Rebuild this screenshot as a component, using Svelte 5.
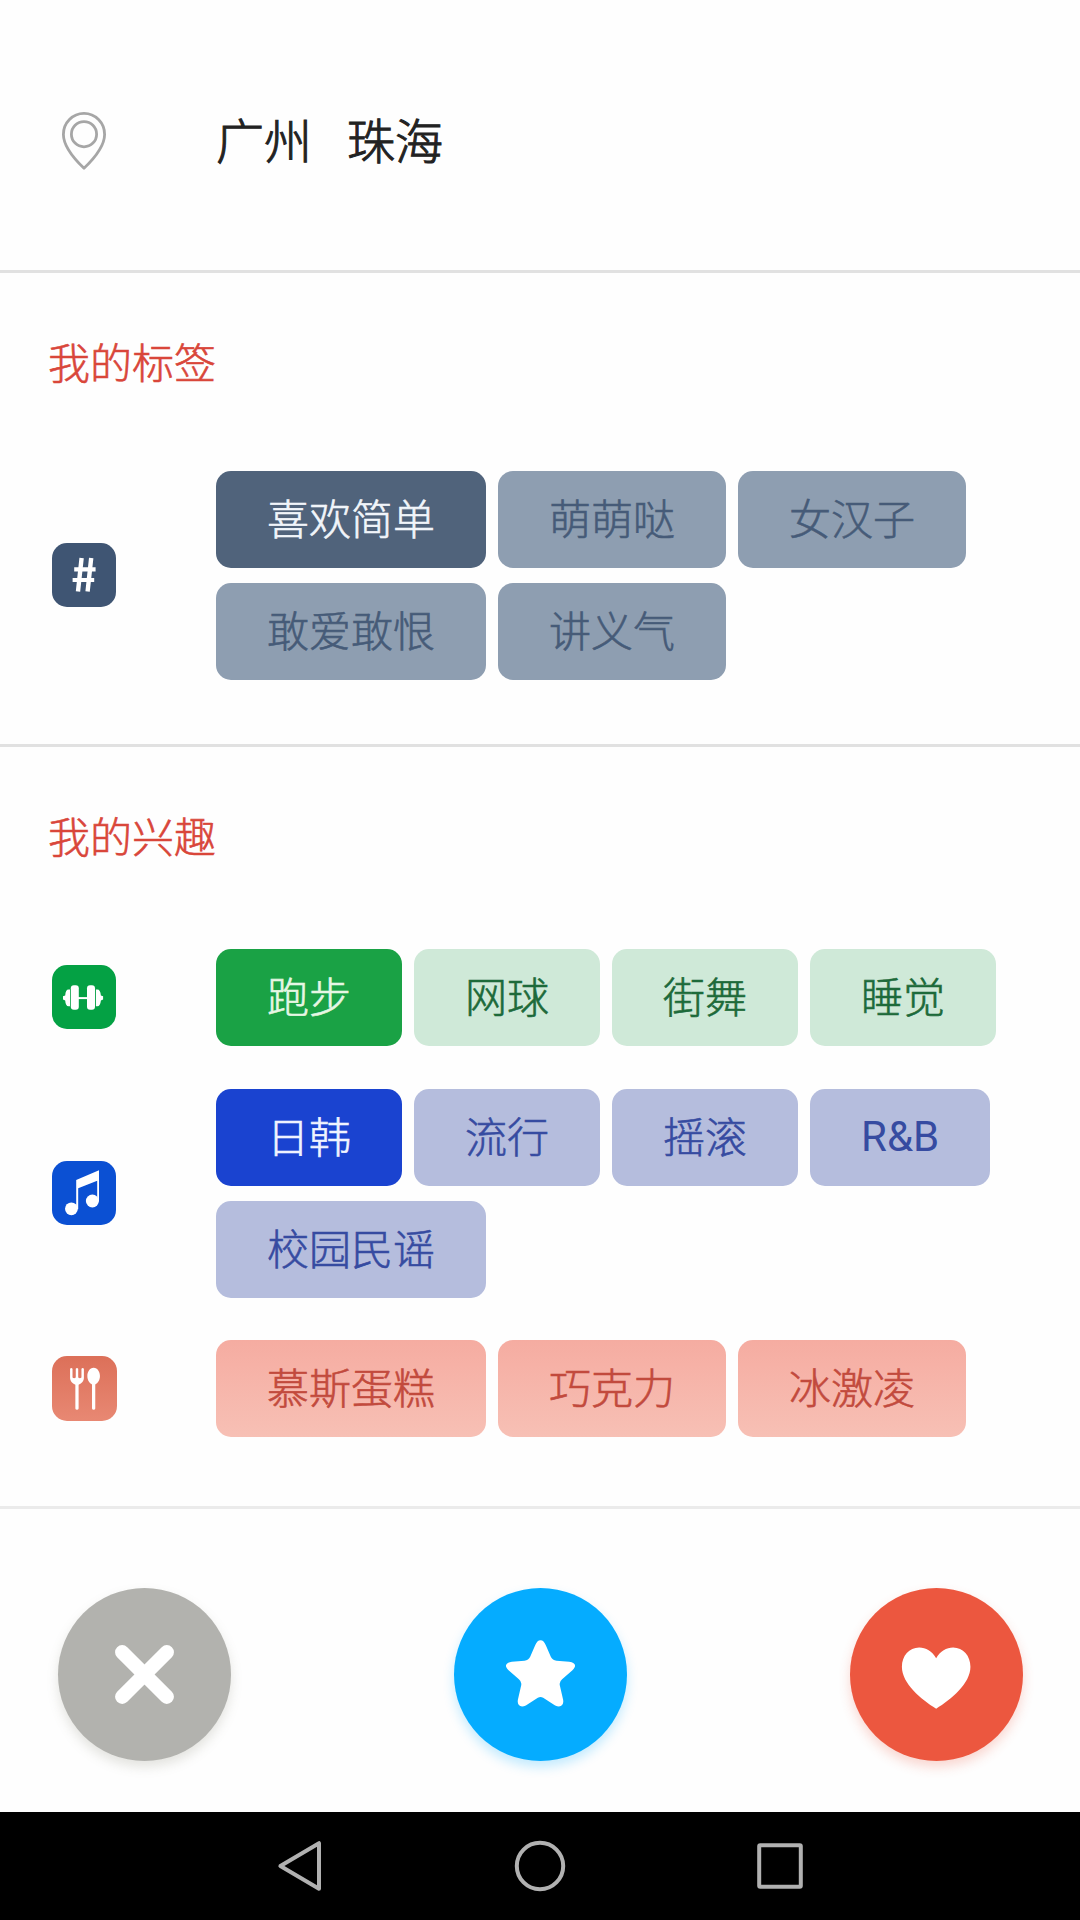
<script>
  const tags = [
    { label: '喜欢简单', active: true },
    { label: '萌萌哒' },
    { label: '女汉子' },
    { label: '敢爱敢恨' },
    { label: '讲义气' }
  ];

  const interests = [
    {
      kind: 'sport',
      items: [{ label: '跑步', active: true }, { label: '网球' }, { label: '街舞' }, { label: '睡觉' }]
    },
    {
      kind: 'music',
      items: [
        { label: '日韩', active: true },
        { label: '流行' },
        { label: '摇滚' },
        { label: 'R&B', latin: true },
        { label: '校园民谣' }
      ]
    },
    { kind: 'food', items: [{ label: '慕斯蛋糕' }, { label: '巧克力' }, { label: '冰激凌' }] }
  ];
</script>

{#snippet badge(kind)}
  <svg class="badge {kind}" viewBox="0 0 64 64">
    {#if kind === 'tag'}
      <g stroke="#fff" fill="none">
        <path d="M29.6 15 26 48.6M39.2 15 35.6 48.6" stroke-width="4.4" />
        <path d="M22.2 26.4H43.6M20.6 37H42.2" stroke-width="4.2" />
      </g>
    {:else if kind === 'sport'}
      <g fill="#fff">
        <rect x="18.8" y="20.3" width="8" height="24.4" rx="3" />
        <rect x="35" y="20.3" width="8" height="24.4" rx="3" />
        <path d="M18 24.6V41.2H16.5Q13.6 41.2 13.2 35.4L11 34.6V31.2L13.2 30.4Q13.6 24.6 16.5 24.6Z" />
        <path d="M43.9 24.6V41.2H45.4Q48.3 41.2 48.9 35.4L51.1 34.6V31.2L48.9 30.4Q48.3 24.6 45.4 24.6Z" />
        <rect x="26" y="32.1" width="10" height="2" />
      </g>
    {:else if kind === 'music'}
      <g fill="#fff">
        <path d="M24.2 19 47 9.2V40.5H45.2V19.8L26.2 27.2V48.2H24.2Z" />
        <circle cx="19.4" cy="47.8" r="6.4" />
        <circle cx="40.4" cy="40" r="6.5" />
      </g>
    {:else}
      <g fill="#fff">
        <path d="M17.8 12.6Q19 11.2 20.2 12.6V21.2Q21.8 22.6 23.4 21.2V12.6Q24.6 11.2 25.8 12.6V21.2Q27.4 22.6 29 21.2V12.6Q30.2 11.2 31.4 12.6V22Q31.2 26.4 26.2 28.4V51.6Q26 53 24.6 53T23 51.6V28.4Q18 26.4 17.8 22Z" />
        <path d="M41 11.6C45 11.6 47.2 15.8 47.2 19.8C47.2 23.8 45.2 27 42.6 28V51.6Q42.4 53 41 53T39.4 51.6V28C36.8 27 34.8 23.8 34.8 19.8C34.8 15.8 37 11.6 41 11.6Z" />
      </g>
    {/if}
  </svg>
{/snippet}

{#snippet group(kind, items)}
  <div class="group">
    <div class="lead">{@render badge(kind)}</div>
    <div class="chips">
      {#each items as item}
        <span class="chip {kind}" class:active={item.active} class:latin={item.latin}>{item.label}</span>
      {/each}
    </div>
  </div>
{/snippet}

<div class="screen">
  <section class="places">
    <div class="lead">
      <svg class="pin" viewBox="0 0 46 60" fill="none" stroke="#a6a6a6" stroke-width="2.8" stroke-linejoin="round">
        <path d="M23 57.2C15 49.5 2.4 36.5 2.4 23.4A20.6 21 0 0 1 43.6 23.4C43.6 36.5 31 49.5 23 57.2Z" />
        <circle cx="23" cy="23.2" r="12.6" />
      </svg>
    </div>
    <span class="cities">广州   珠海</span>
  </section>

  <section class="block tags">
    <h2>我的标签</h2>
    {@render group('tag', tags)}
  </section>

  <section class="block interests">
    <h2>我的兴趣</h2>
    {#each interests as row}
      {@render group(row.kind, row.items)}
    {/each}
  </section>

  <div class="actions">
    <button class="pass" aria-label="pass">
      <svg viewBox="0 0 520 520">
        <path d="M193 193 327 327M327 193 193 327" stroke="#fff" stroke-width="43" stroke-linecap="round" />
      </svg>
    </button>
    <button class="star" aria-label="star">
      <svg viewBox="0 0 520 520">
        <path
          fill="#fff"
          d="M260 157C267 157 272 163 276 172L291 207Q296 218 308 219L346 222C366 224 369 236 356 247L325 274Q316 281 318 292L328 336C331 353 320 361 304 353L268 330Q260 325 252 330L216 353C200 361 189 353 192 336L202 292Q204 281 195 274L164 247C151 236 154 224 174 222L212 219Q224 218 229 207L244 172C248 163 253 157 260 157Z"
        />
      </svg>
    </button>
    <button class="like" aria-label="like">
      <svg viewBox="0 0 520 520">
        <path
          fill="#fff"
          d="M259 211C247 190 228 179 208 179C178 179 156 204 156 237C156 288 214 335 259 363C304 335 362 288 362 237C362 204 340 179 310 179C290 179 271 190 259 211Z"
        />
      </svg>
    </button>
  </div>

  <nav>
    <svg viewBox="0 0 54 54"><path d="M46 4.2V49.8L7.4 27Z" /></svg>
    <svg viewBox="0 0 54 54"><circle cx="27" cy="27" r="23.2" /></svg>
    <svg viewBox="0 0 54 54"><rect x="6.2" y="6.2" width="41.6" height="41.6" rx="1" /></svg>
  </nav>
</div>

<style>
  :global(body) {
    background: #fefefe;
  }
  .screen {
    width: 1080px;
    height: 1920px;
    display: flex;
    flex-direction: column;
    overflow: hidden;
    background: #fefefe;
    font-family: Roboto, 'Noto Sans CJK SC', sans-serif;
    font-weight: 300;
    -webkit-text-stroke: 0.6px currentColor;
  }
  section {
    box-sizing: border-box;
    border-bottom: 3px solid #e1e1e1;
  }
  .lead {
    width: 216px;
    flex: none;
    display: flex;
    padding-left: 52px;
    box-sizing: border-box;
  }
  .places {
    height: 273px;
    display: flex;
    align-items: flex-start;
    padding-top: 111px;
  }
  .places .lead {
    padding-left: 61px;
  }
  .pin {
    width: 46px;
    height: 60px;
  }
  .cities {
    font-size: 48px;
    line-height: 64px;
    color: #222;
    white-space: pre;
    -webkit-text-stroke-width: 1px;
  }
  .block {
    padding-top: 62px;
    display: flex;
    flex-direction: column;
  }
  .tags {
    height: 474px;
  }
  .interests {
    height: 762px;
    border-color: #ebebeb;
  }
  h2 {
    margin: 0 0 76px 48px;
    font-size: 42px;
    line-height: 60px;
    font-weight: 300;
    color: #d9463a;
  }
  .interests h2 {
    margin-bottom: 80px;
  }
  .group {
    display: flex;
    align-items: center;
    margin-bottom: 42.5px;
  }
  .chips {
    display: flex;
    flex-wrap: wrap;
    gap: 15px 12px;
    width: 810px;
  }
  .badge {
    width: 64px;
    height: 64px;
    margin-bottom: 1px;
    border-radius: 15px;
  }
  .badge.tag {
    background: #3f5573;
  }
  .badge.sport {
    background: #04a144;
  }
  .badge.music {
    background: #0b50d3;
  }
  .badge.food {
    width: 65px;
    height: 65px;
    background: linear-gradient(#dc7059, #e88873);
  }
  .chip {
    height: 97px;
    padding: 0 51px;
    border-radius: 15px;
    font-size: 42px;
    line-height: 99px;
    white-space: nowrap;
  }
  .chip.latin {
    font-weight: 400;
    line-height: 96px;
    -webkit-text-stroke-width: 0;
  }
  .chip.tag {
    background: #8e9eb1;
    color: #465b78;
  }
  .chip.tag.active {
    background: #50637b;
    color: #f1f5fa;
  }
  .chip.sport {
    background: #cfe9d8;
    color: #1d6a3a;
  }
  .chip.sport.active {
    background: #1aa245;
    color: #e6f7e4;
  }
  .chip.music {
    background: #b5bddd;
    color: #364ba1;
  }
  .chip.music.active {
    background: #1a43d0;
    color: #f0f3ff;
  }
  .chip.food {
    background: linear-gradient(#f5aca1 0%, #f6b1a6 25%, #f7c0b5 100%);
    color: #c24a3d;
  }
  .actions {
    height: 303px;
    display: flex;
    justify-content: space-between;
    align-items: flex-start;
    padding: 78.5px 57px 0 57.5px;
    box-sizing: border-box;
  }
  button {
    width: 173px;
    height: 173px;
    padding: 0;
    border: 0;
    border-radius: 50%;
  }
  button svg {
    display: block;
    width: 173px;
    height: 173px;
  }
  .pass {
    background: #b2b2ae;
    box-shadow: 0 6px 12px rgba(120, 120, 100, 0.2);
  }
  .star {
    background: #05acff;
    box-shadow: 0 6px 12px rgba(5, 172, 255, 0.24);
  }
  .like {
    background: #ec573f;
    box-shadow: 0 6px 12px rgba(236, 87, 63, 0.24);
  }
  nav {
    height: 108px;
    flex: none;
    display: flex;
    justify-content: center;
    align-items: center;
    gap: 186px;
    background: #000;
  }
  nav svg {
    width: 54px;
    height: 54px;
    fill: none;
    stroke: #b1b1b1;
    stroke-width: 4;
    stroke-linejoin: round;
  }
</style>
